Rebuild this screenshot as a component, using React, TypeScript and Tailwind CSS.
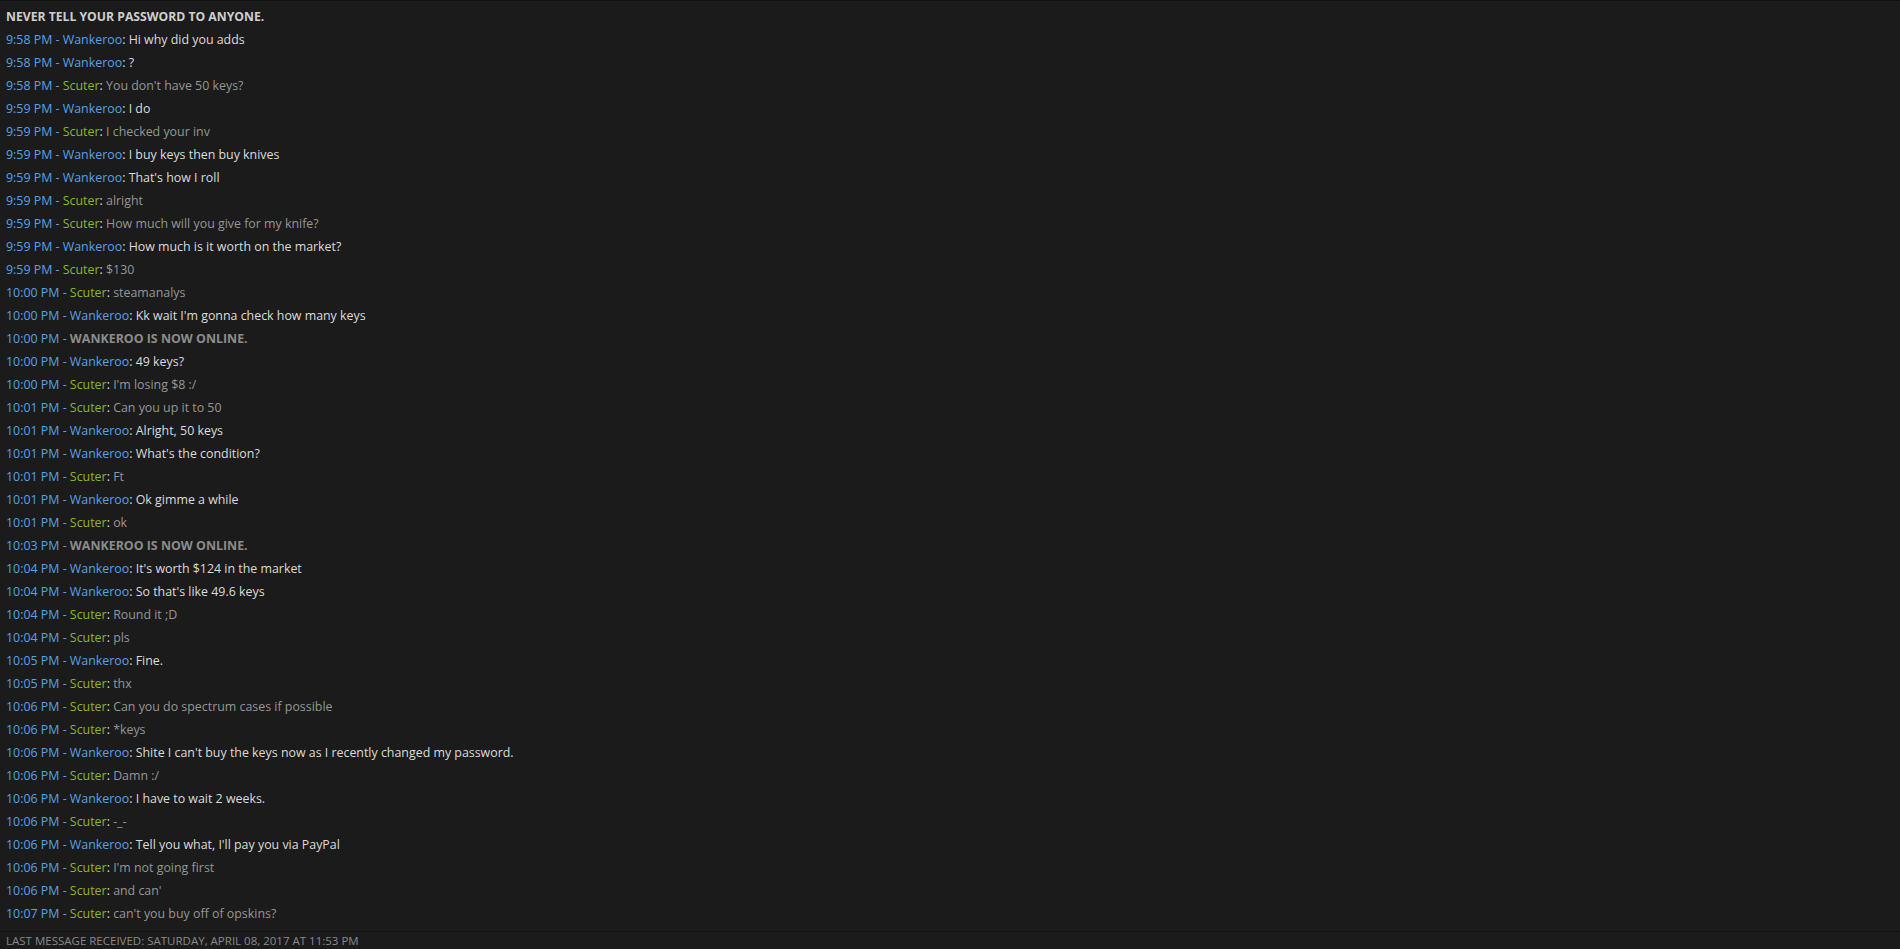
import React from "react";

type Msg = { t: string; who: "W" | "S" | "sys"; text: string };

const msgs: Msg[] = [
  { t: "9:58 PM", who: "W", text: "Hi why did you adds" },
  { t: "9:58 PM", who: "W", text: "?" },
  { t: "9:58 PM", who: "S", text: "You don't have 50 keys?" },
  { t: "9:59 PM", who: "W", text: "I do" },
  { t: "9:59 PM", who: "S", text: "I checked your inv" },
  { t: "9:59 PM", who: "W", text: "I buy keys then buy knives" },
  { t: "9:59 PM", who: "W", text: "That's how I roll" },
  { t: "9:59 PM", who: "S", text: "alright" },
  { t: "9:59 PM", who: "S", text: "How much will you give for my knife?" },
  { t: "9:59 PM", who: "W", text: "How much is it worth on the market?" },
  { t: "9:59 PM", who: "S", text: "$130" },
  { t: "10:00 PM", who: "S", text: "steamanalys" },
  { t: "10:00 PM", who: "W", text: "Kk wait I'm gonna check how many keys" },
  { t: "10:00 PM", who: "sys", text: "WANKEROO IS NOW ONLINE." },
  { t: "10:00 PM", who: "W", text: "49 keys?" },
  { t: "10:00 PM", who: "S", text: "I'm losing $8 :/" },
  { t: "10:01 PM", who: "S", text: "Can you up it to 50" },
  { t: "10:01 PM", who: "W", text: "Alright, 50 keys" },
  { t: "10:01 PM", who: "W", text: "What's the condition?" },
  { t: "10:01 PM", who: "S", text: "Ft" },
  { t: "10:01 PM", who: "W", text: "Ok gimme a while" },
  { t: "10:01 PM", who: "S", text: "ok" },
  { t: "10:03 PM", who: "sys", text: "WANKEROO IS NOW ONLINE." },
  { t: "10:04 PM", who: "W", text: "It's worth $124 in the market" },
  { t: "10:04 PM", who: "W", text: "So that's like 49.6 keys" },
  { t: "10:04 PM", who: "S", text: "Round it ;D" },
  { t: "10:04 PM", who: "S", text: "pls" },
  { t: "10:05 PM", who: "W", text: "Fine." },
  { t: "10:05 PM", who: "S", text: "thx" },
  { t: "10:06 PM", who: "S", text: "Can you do spectrum cases if possible" },
  { t: "10:06 PM", who: "S", text: "*keys" },
  { t: "10:06 PM", who: "W", text: "Shite I can't buy the keys now as I recently changed my password." },
  { t: "10:06 PM", who: "S", text: "Damn :/" },
  { t: "10:06 PM", who: "W", text: "I have to wait 2 weeks." },
  { t: "10:06 PM", who: "S", text: "-_-" },
  { t: "10:06 PM", who: "W", text: "Tell you what, I'll pay you via PayPal" },
  { t: "10:06 PM", who: "S", text: "I'm not going first" },
  { t: "10:06 PM", who: "S", text: "and can'" },
  { t: "10:07 PM", who: "S", text: "can't you buy off of opskins?" },
  { t: "10:07 PM", who: "W", text: "I can't, that's a lot of fees" },
];

function Line({ m }: { m: Msg }) {
  return (
    <div className="h-[23px] leading-[23px] whitespace-nowrap">
      <span className="text-[#58a2e8]">{m.t} - </span>
      {m.who === "sys" ? (
        <span className="font-bold text-[#8c8c8c]">{m.text}</span>
      ) : m.who === "W" ? (
        <>
          <span className="text-[#58a2e8]">Wankeroo</span>
          <span className="text-[#dcdcdc]">: {m.text}</span>
        </>
      ) : (
        <>
          <span className="text-[#8cb826]">Scuter</span>
          <span className="text-[#dcdcdc]">: </span>
          <span className="text-[#969696]">{m.text}</span>
        </>
      )}
    </div>
  );
}

export default function App() {
  return (
    <div
      className="w-[1900px] h-[949px] bg-[#1b1b1b] flex flex-col overflow-hidden text-[12.4px]"
      style={{ fontFamily: '"Open Sans", "Noto Sans", sans-serif' }}
    >
      <div className="h-px bg-[#121212]" />
      <div className="flex-1 overflow-hidden pl-[6px] pt-[4px]">
        <div className="h-[23px] leading-[23px] font-bold text-[#cfcfcf] text-[12.2px]">
          NEVER TELL YOUR PASSWORD TO ANYONE.
        </div>
        {msgs.map((m, i) => (
          <Line key={i} m={m} />
        ))}
      </div>
      <div className="h-[18px] border-t border-[#121212] pl-[6px] text-[11.5px] leading-[17px] text-[#8a8a8a] uppercase">
        Last message received: Saturday, April 08, 2017 at 11:53 PM
      </div>
    </div>
  );
}
